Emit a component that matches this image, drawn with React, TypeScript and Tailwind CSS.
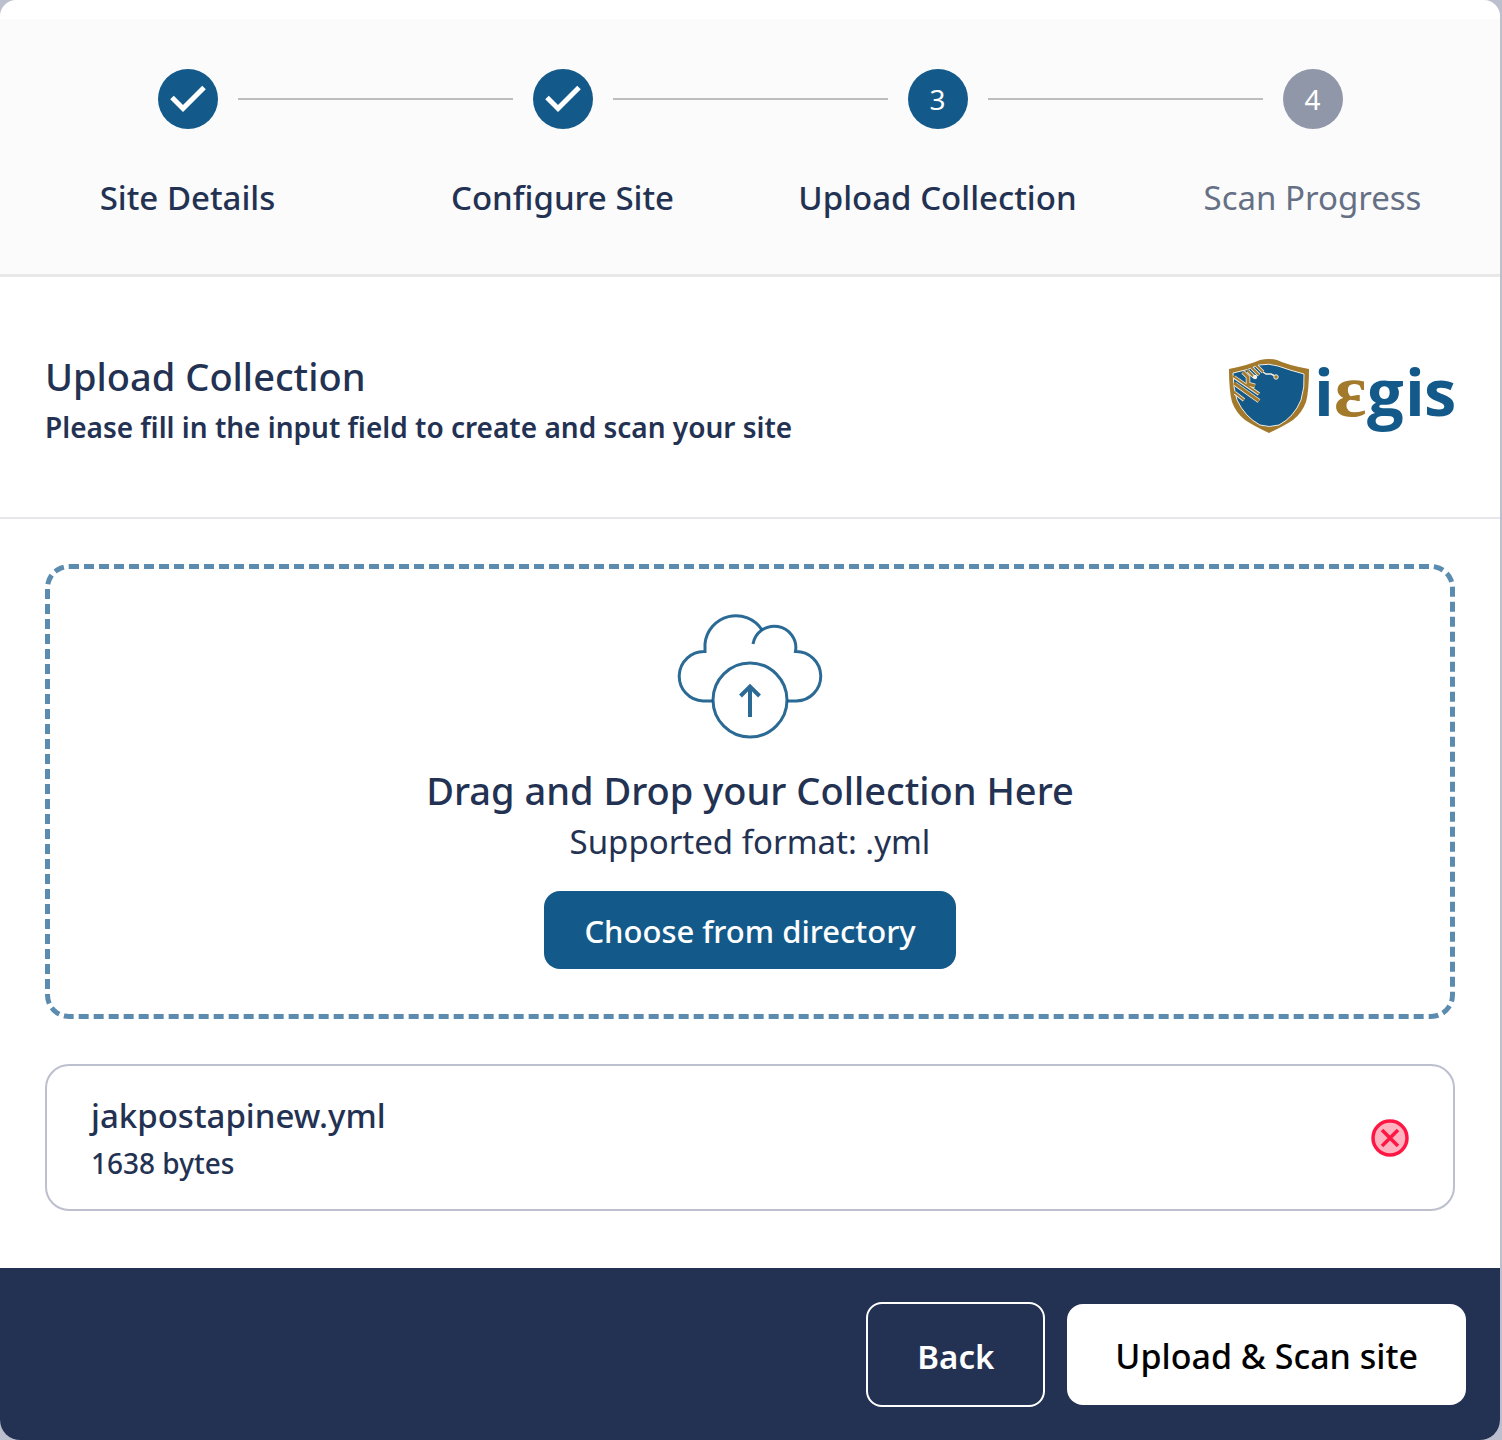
import React from "react";

type StepState = "done" | "active" | "pending";

const steps: { label: string; state: StepState }[] = [
  { label: "Site Details", state: "done" },
  { label: "Configure Site", state: "done" },
  { label: "Upload Collection", state: "active" },
  { label: "Scan Progress", state: "pending" },
];

function CheckIcon() {
  return (
    <svg viewBox="0 0 60 60" className="size-[60px]" aria-hidden="true">
      <path d="M14 28.500 L25 39.500 L46 18.500" fill="none" stroke="#fff" strokeWidth="5" />
    </svg>
  );
}

function Stepper() {
  return (
    <ol className="grid grid-cols-4 border-b-3 border-[#e8e8e8] bg-[#fbfbfb] pt-[50px] pb-[51px]">
      {steps.map((step, i) => (
        <li key={step.label} className="flex flex-col items-center gap-11">
          <div className="flex w-full items-center gap-5">
            <span className={i === 0 ? "h-0.5 flex-1" : "h-0.5 flex-1 bg-[#bdbdbd]"} />
            <span
              className={
                step.state === "pending"
                  ? "flex size-[60px] items-center justify-center rounded-full bg-[#8f97a9] text-[28px] text-white"
                  : "flex size-[60px] items-center justify-center rounded-full bg-[#135a8a] text-[28px] text-white"
              }
            >
              {step.state === "done" ? <CheckIcon /> : i + 1}
            </span>
            <span
              className={i === steps.length - 1 ? "h-0.5 flex-1" : "h-0.5 flex-1 bg-[#bdbdbd]"}
            />
          </div>
          <span
            className={
              step.state === "pending"
                ? "text-[33px] leading-[50px] whitespace-nowrap text-[#667085]"
                : "text-[33px] leading-[50px] font-medium whitespace-nowrap"
            }
          >
            {step.label}
          </span>
        </li>
      ))}
    </ol>
  );
}

function Logo() {
  return (
    <svg
      viewBox="0 -20 230 120"
      className="h-[120px] w-[230px] shrink-0"
      role="img"
      aria-label="iεgis"
    >
      <path
        d="M4 12 Q24 8 35 3 Q44 1 52 3 Q62 8 84 12 Q84 34 81 45 Q77 56 68 63 Q59 69 44 76 Q29 69 20 63 Q11 56 7 45 Q4 34 4 12Z"
        fill="#a3792c"
      />
      <path
        d="M8 16 Q24 13 34 8 Q44 6 53 9 Q64 13 79 17 Q80 30 76 43 Q69 60 54 68 Q44 71 35 68 Q20 60 12 43 Q8 30 8 16Z"
        fill="#135a8a"
        stroke="#f3efe6"
        strokeWidth="1"
      />
      <g fill="none" stroke="#f3efe6" strokeWidth="4.500">
        <path d="M10 27 L34 44 M18 15 L23 20 V27 L30 29" />
      </g>
      <g fill="none" stroke="#f3efe6" strokeWidth="3.500">
        <path d="M10 36 L19 43 M9 20 L34 37 M23 14 L29 20 M27 11 L34 18 M32 9 L38 15" />
      </g>
      <path d="M38 15 L41 17 H46 L50 19" fill="none" stroke="#f3efe6" strokeWidth="1.500" />
      <g fill="none" stroke="#a3792c" strokeWidth="3">
        <path d="M9 26 L34 44 M18 15 L23 20 V27 L30 29" />
      </g>
      <g fill="none" stroke="#a3792c" strokeWidth="2">
        <path d="M9 35 L19 43 M8 19 L34 37 M22 13 L29 20 M26 10 L34 18 M31 8 L38 15" />
      </g>
      <circle cx="51" cy="20" r="2.200" fill="#a3792c" stroke="#f3efe6" strokeWidth="1" />
      <circle cx="30" cy="20" r="2.200" fill="#f3efe6" />
      <g fontFamily="'Open Sans', sans-serif" fontWeight="700" fontSize="65" fill="#135a8a">
        <text x="89" y="59">i</text>
        <text x="142" y="59">g</text>
        <text x="180" y="59">i</text>
        <text x="199" y="59">s</text>
      </g>
      <text
        x="109"
        y="59"
        fontFamily="'Liberation Serif', serif"
        fontWeight="700"
        fontSize="76"
        fill="#a3792c"
      >
        ε
      </text>
    </svg>
  );
}

function CloudUploadIcon() {
  return (
    <svg
      viewBox="0 0 146 126"
      className="h-[126px] w-[146px]"
      fill="none"
      stroke="#135a8a"
      strokeOpacity="0.9"
      strokeWidth="3"
      aria-hidden="true"
    >
      <path d="M36 88 H26 A24.500 24.500 0 0 1 28 38.500 V31 A31 31 0 0 1 85 17" />
      <path d="M76 31 A21.500 21.500 0 0 1 118.500 38.500 A24.500 24.500 0 0 1 119.500 88 H110" />
      <circle cx="73" cy="87" r="37" />
      <path d="M73 104 V74 M63.500 83 L73 73.500 L82.500 83" strokeWidth="4" />
    </svg>
  );
}

function RemoveIcon() {
  return (
    <svg viewBox="0 0 38 38" className="size-[38px]" fill="none" stroke="#ff1744" aria-hidden="true">
      <circle cx="19" cy="19" r="17" fill="#ffb3c1" strokeWidth="3.500" />
      <path d="M11 11 L27 27 M27 11 L11 27" strokeWidth="3.500" />
    </svg>
  );
}

export default function App() {
  return (
    <div className="bg-[#bcbfce] pr-0.5 font-['Noto_Sans',sans-serif] text-[#233252]">
      <main className="overflow-hidden rounded-t-2xl rounded-b-[20px] bg-white pt-[19px]">
        <Stepper />

        <header className="flex items-center justify-between border-b-2 border-[#e6e6eb] px-[45px] py-[60px]">
          <div className="pt-2">
            <h1 className="text-[38px] leading-[52px] font-medium">Upload Collection</h1>
            <p className="text-[28px] leading-[50px] font-semibold">
              Please fill in the input field to create and scan your site
            </p>
          </div>
          <Logo />
        </header>

        <div className="px-[45px] pt-[45px] pb-[57px]">
          <section className="flex flex-col items-center rounded-3xl border-5 border-dashed border-[#5b8cb0] pt-11 pb-[45px]">
            <CloudUploadIcon />
            <h2 className="mt-6 text-[38px] leading-[54px] font-medium">
              Drag and Drop your Collection Here
            </h2>
            <p className="text-[33px] leading-[50px]">Supported format: .yml</p>
            <button
              type="button"
              className="mt-6 h-[78px] rounded-2xl bg-[#135a8a] px-10 pt-0.5 text-[31px] font-medium text-white"
            >
              Choose from directory
            </button>
          </section>

          <section className="mt-[45px] flex items-center justify-between rounded-3xl border-2 border-[#bcbfce] px-11 py-[22px]">
            <div className="pt-1">
              <p className="text-[33px] leading-[48px] font-medium">jakpostapinew.yml</p>
              <p className="text-[28px] leading-[47px] font-medium">1638 bytes</p>
            </div>
            <button type="button" aria-label="Remove file">
              <RemoveIcon />
            </button>
          </section>
        </div>

        <footer className="flex items-center justify-end gap-[22px] bg-[#233252] pt-[34px] pr-[34px] pb-[33px]">
          <button
            type="button"
            className="h-[105px] rounded-2xl border-2 border-white px-[49px] pt-1 text-[33px] font-semibold text-white"
          >
            Back
          </button>
          <button
            type="button"
            className="h-[101px] rounded-2xl bg-white px-12 pt-1 text-[34px] font-medium text-black"
          >
            Upload &amp; Scan site
          </button>
        </footer>
      </main>
    </div>
  );
}
